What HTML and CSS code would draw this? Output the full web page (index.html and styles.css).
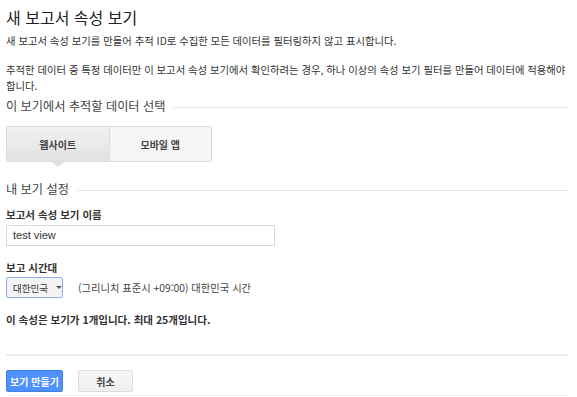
FILE: index.html
```html
<!DOCTYPE html>
<html lang="ko">
<head>
<meta charset="utf-8">
<link rel="stylesheet" href="styles.css">
</head>
<body>
<div class="page">
  <h1 class="title">새 보고서 속성 보기</h1>
  <p class="desc">새 보고서 속성 보기를 만들어 추적 ID로 수집한 모든 데이터를 필터링하지 않고 표시합니다.</p>
  <p class="desc desc2">추적한 데이터 중 특정 데이터만 이 보고서 속성 보기에서 확인하려는 경우, 하나 이상의 속성 보기 필터를 만들어 데이터에 적용해야 합니다.</p>

  <div class="section-head"><span>이 보기에서 추적할 데이터 선택</span><i class="rule"></i></div>
  <div class="tabs">
    <div class="tab active">웹사이트</div>
    <div class="tab">모바일 앱</div>
  </div>

  <div class="section-head second"><span>내 보기 설정</span><i class="rule"></i></div>

  <div class="label">보고서 속성 보기 이름</div>
  <div class="input">test view</div>

  <div class="label tz-label">보고 시간대</div>
  <div class="tz-row">
    <div class="select">대한민국 <span class="caret"></span></div>
    <div class="tz-text">(그리니치 표준시 +09:00) 대한민국 시간</div>
  </div>

  <div class="note">이 속성은 보기가 1개입니다. 최대 25개입니다.</div>

  <div class="divider"></div>

  <div class="actions">
    <button class="btn primary">보기 만들기</button>
    <button class="btn">취소</button>
  </div>
</div>
</body>
</html>
```
FILE: styles.css
```css
html, body {
  margin: 0;
  padding: 0;
  background: #fff;
}
body {
  font-family: "Noto Sans CJK KR", "Noto Sans", sans-serif;
  color: #333;
}
.page {
  padding: 0 8px 0 6px;
  width: 563px;
}
.title {
  margin: 0;
  padding-top: 6px;
  font-size: 16px;
  font-weight: normal;
  line-height: 22px;
  color: #222;
}
.desc {
  margin: 5px 0 0;
  font-size: 10.35px;
  line-height: 16px;
  color: #333;
  word-break: keep-all;
}
.desc2 {
  margin-top: 13px;
}
.section-head {
  display: flex;
  align-items: center;
  margin-top: 3px;
  font-size: 12.2px;
  line-height: 18px;
  color: #444;
}
.section-head .rule {
  flex: 1;
  height: 1px;
  background: #e5e5e5;
  margin-left: 8px;
  margin-top: 2px;
}
.tabs {
  display: flex;
  margin-top: 11px;
  width: 206px;
  height: 36px;
  border: 1px solid #dcdcdc;
  border-radius: 2px;
  box-sizing: border-box;
}
.tab {
  flex: 1;
  display: flex;
  align-items: center;
  justify-content: center;
  font-size: 10px;
  font-weight: bold;
  color: #444;
  background: #f5f5f5;
  position: relative;
}
.tab + .tab {
  border-left: 1px solid #dcdcdc;
}
.tab.active {
  background: linear-gradient(#f1f1f1, #e2e2e2);
}
.tab.active::after {
  content: "";
  position: absolute;
  left: 50%;
  bottom: -6px;
  margin-left: -6px;
  border-left: 6px solid transparent;
  border-right: 6px solid transparent;
  border-top: 5px solid #e2e2e2;
}
.second {
  margin-top: 18px;
}
.label {
  margin-top: 9px;
  font-size: 10.5px;
  font-weight: bold;
  line-height: 16px;
  color: #333;
}
.input {
  margin-top: 2px;
  width: 269px;
  height: 21px;
  box-sizing: border-box;
  border: 1px solid #d9d9d9;
  padding: 0 6px;
  font-family: "Liberation Sans", Arial, sans-serif;
  font-size: 11px;
  line-height: 19px;
  color: #333;
}
.tz-label {
  margin-top: 14px;
}
.tz-row {
  display: flex;
  align-items: center;
  margin-top: 1px;
}
.select {
  display: flex;
  align-items: center;
  width: 57px;
  height: 21px;
  box-sizing: border-box;
  border: 1px solid #8fb0ea;
  border-radius: 2px;
  background: #f4f4f4;
  padding-left: 6px;
  font-size: 9.5px;
  color: #333;
}
.caret {
  display: inline-block;
  margin-left: 8px;
  border-left: 3px solid transparent;
  border-right: 3px solid transparent;
  border-top: 3px solid #555;
}
.tz-text {
  margin-left: 15px;
  font-size: 10.3px;
  color: #444;
}
.note {
  margin-top: 14px;
  font-size: 10.5px;
  font-weight: bold;
  line-height: 16px;
  color: #333;
}
.divider {
  margin-top: 26px;
  height: 2px;
  background: #ededed;
  width: 563px;
}
.actions {
  display: flex;
  gap: 15px;
  margin-top: 14px;
  padding-bottom: 3px;
  border-bottom: 1px solid #f2f2f2;
}
.btn {
  height: 22px;
  padding: 0;
  border: 1px solid #dcdcdc;
  border-radius: 2px;
  background: linear-gradient(#f6f6f6, #efefef);
  font-family: "Noto Sans CJK KR", sans-serif;
  font-size: 10px;
  font-weight: bold;
  color: #444;
  width: 55px;
  text-align: center;
}
.btn.primary {
  background: #4d90fe;
  border-color: #3f7fe8;
  color: #fff;
  width: 57px;
}
```
